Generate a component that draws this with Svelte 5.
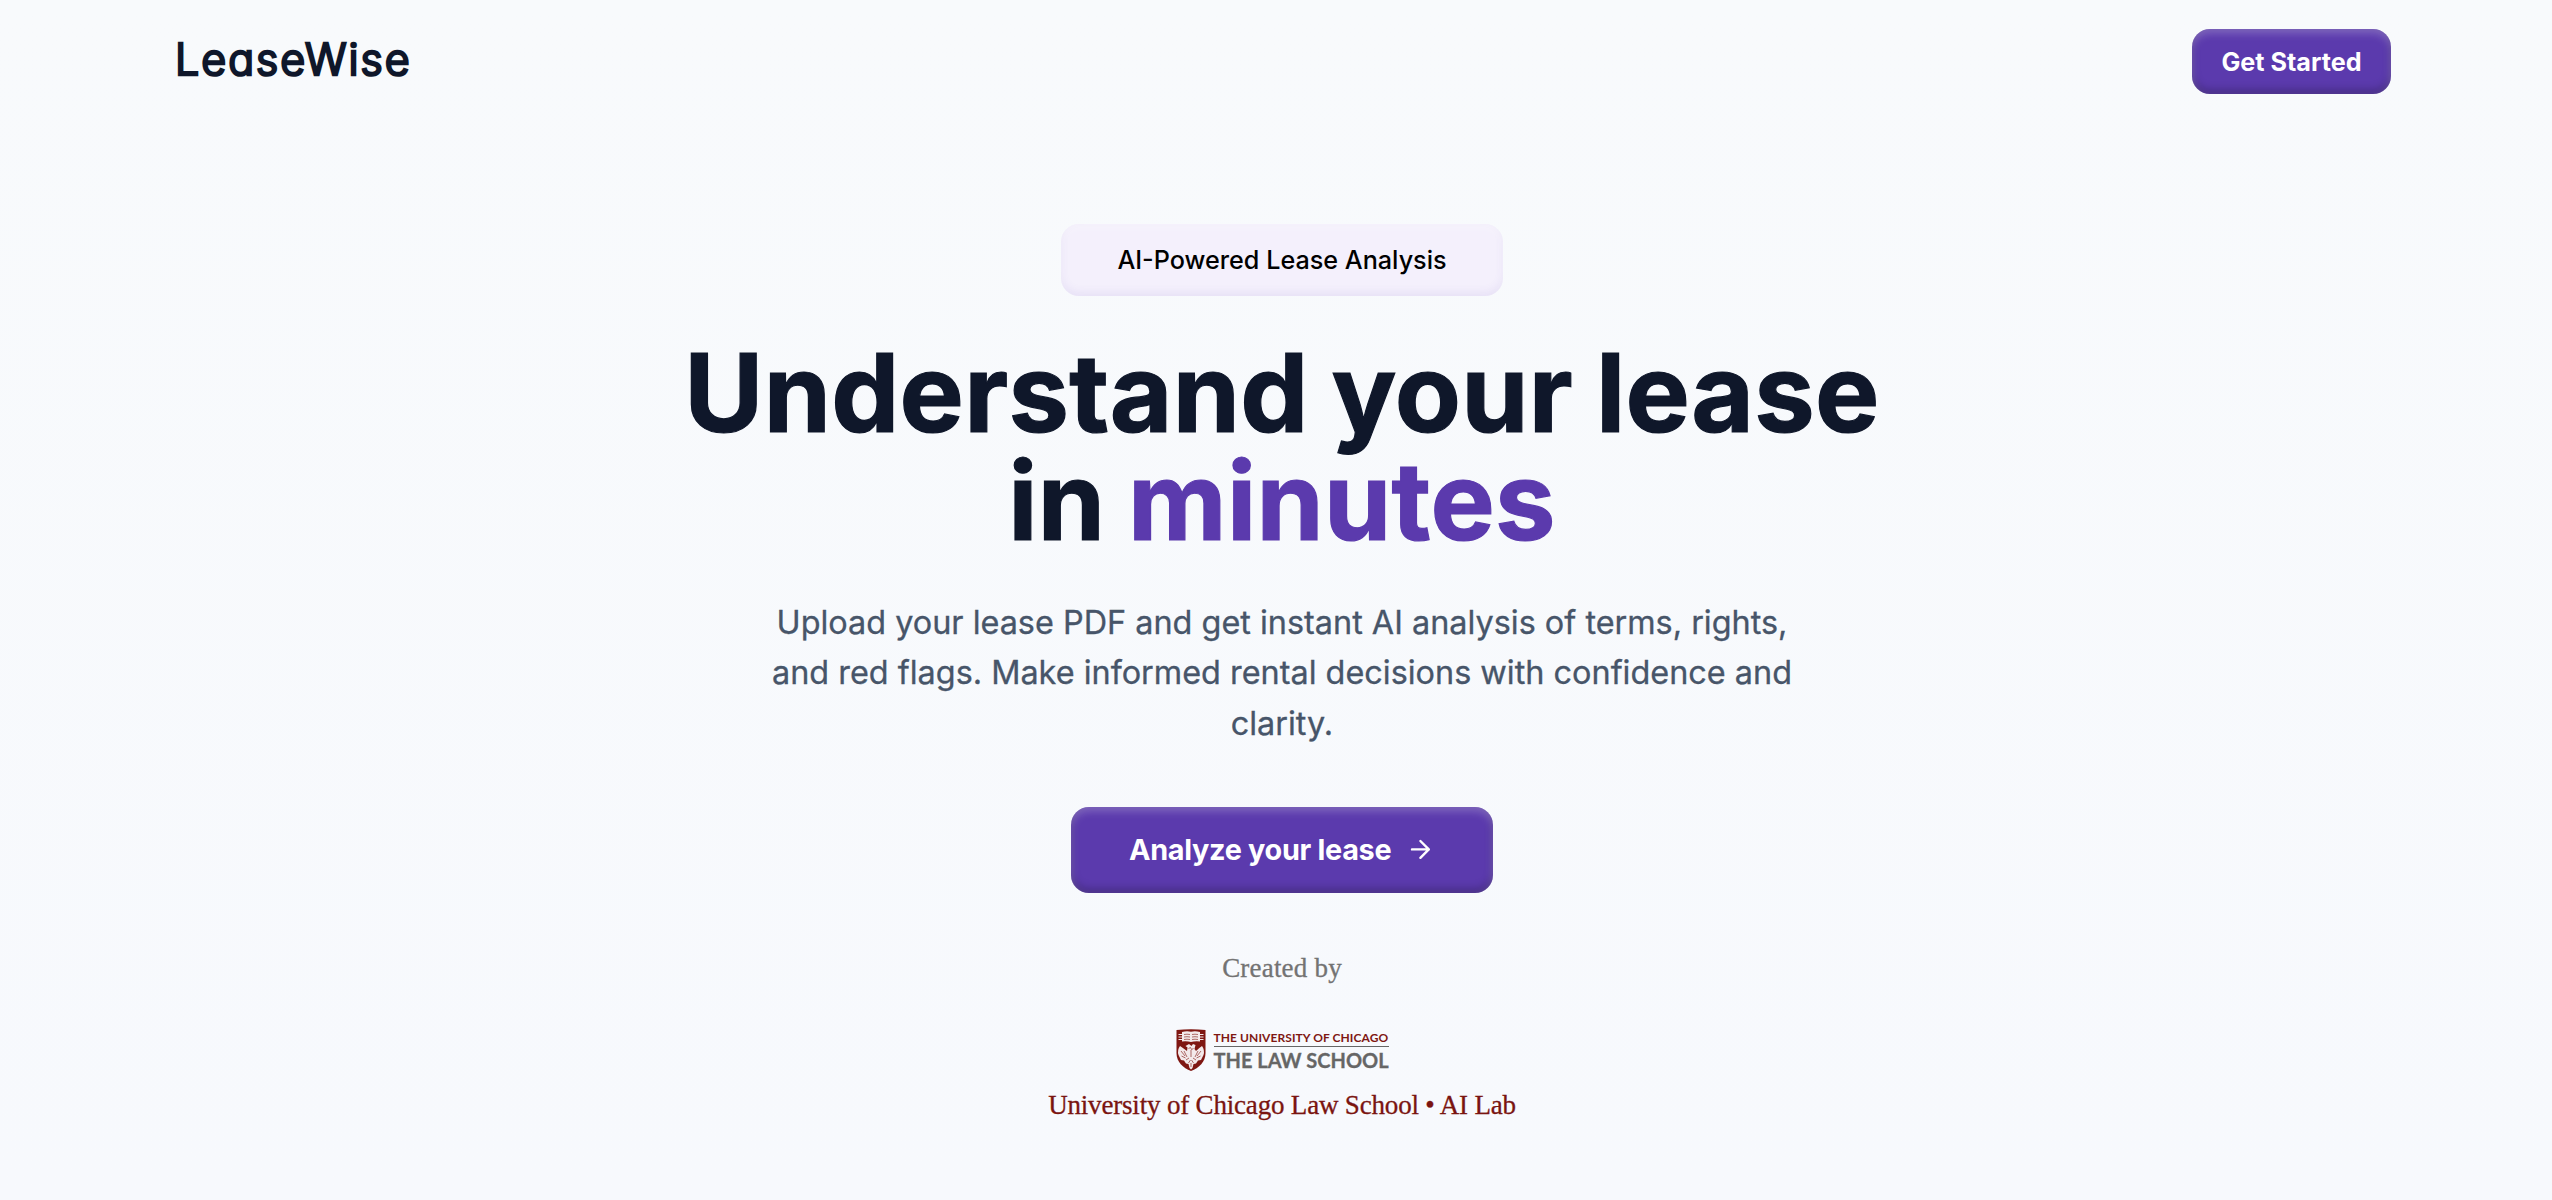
<script lang="ts">
  const bookLines = [5.5, 8, 10.5];
</script>

<div class="page">
  <header>
    <a class="brand" href="/">LeaseWise</a>
    <button class="btn btn-small">Get Started</button>
  </header>

  <main>
    <div class="badge">AI-Powered Lease Analysis</div>
    <h1>Understand your lease<br />in <span>minutes</span></h1>
    <p class="lead">
      Upload your lease PDF and get instant AI analysis of terms, rights,<br />
      and red flags. Make informed rental decisions with confidence and<br />
      clarity.
    </p>
    <button class="btn btn-large">
      <b>Analyze your lease</b>
      <svg class="arrow" viewBox="0 0 24 24" aria-hidden="true">
        <path d="M5 12h14M12 5l7 7-7 7" />
      </svg>
    </button>

    <p class="created">Created by</p>
    <div class="school">
      <svg class="shield" viewBox="0 0 30 42" aria-hidden="true">
        <path class="red" d="M.5 1Q15-.6 29.500 1V24C29.500 33 23 39 15 42 7 39 .5 33 .5 24Z" />
        <path class="white" d="M6 3Q11 1.800 15 2.800 19 1.800 24 3V12.500Q19 12 15 13 11 12 6 12.500Z" />
        {#each bookLines as y}
          <path class="white-line" d="M2.500 {y}h3.500M24 {y}h3.500" />
          <path class="red-line" d="M8 {y}q3-.6 6 0M16 {y}q3-.6 6 0" />
        {/each}
        <path class="white" d="M4 17Q1 21 2.500 26L5 31l3 .5 2 3 2.500.5 1 4 1.500 1.500 1.500-1.500 1-4 2.500-.5 2-3 3-.5L27.500 26Q29 21 26 17 23 19 20 22L18.500 20l1-4-2.500-1-1.500 2-2.500-2-3.500 2 2 1.500L11 22Q7 19 4 17Z" />
        <path class="red-line" d="M12.500 19.500l2-1 1 2 2-1M15 21v7M5 22l4 5M8 22l3 6M25 22l-4 5M22 22l-3 6M5.500 27l4 2M24.500 27l-4 2M10 31l3-2M20 31l-3-2M12.500 34l2-3M17.500 34l-2-3M15 34v4" />
      </svg>
      <div class="wordmark">
        <span class="university">THE UNIVERSITY OF CHICAGO</span>
        <span class="law">THE LAW SCHOOL</span>
      </div>
    </div>
    <p class="lab">University of Chicago Law School • AI Lab</p>
  </main>
</div>

<style>
  :global(body) {
    background: #f8fafc;
  }
  .page {
    box-sizing: border-box;
    min-height: 1200px;
    padding-left: 12px;
    overflow: hidden;
    background: linear-gradient(#f8fafc, #f7f9fd);
    color: #0f172a;
    font-family: Inter, sans-serif;
  }
  header {
    display: flex;
    align-items: center;
    justify-content: space-between;
    height: 123px;
    padding: 0 161px 0 163px;
  }
  .brand {
    padding-bottom: 6px;
    color: #0f172a;
    font-size: 43px;
    font-weight: 300;
    font-feature-settings: "cv11";
    letter-spacing: 2px;
    text-decoration: none;
    -webkit-text-stroke: 2.5px #0f172a;
    stroke-linejoin: round;
  }
  .btn {
    display: flex;
    align-items: center;
    justify-content: center;
    box-sizing: border-box;
    border: 0;
    border-radius: 18px;
    background: #5b3aad;
    box-shadow:
      inset 0 4px 8px rgba(255, 255, 255, 0.25),
      inset 0 -4px 8px rgba(0, 0, 0, 0.25);
    color: #fff;
    font-family: inherit;
    font-weight: 600;
  }
  .btn-small {
    width: 199px;
    height: 65px;
    font-size: 25.2px;
    font-weight: 700;
  }
  .btn-large {
    gap: 15px;
    width: 422px;
    height: 86px;
    margin-top: 58px;
    padding-bottom: 2px;
    font-size: 28.8px;
  }
  .btn-large b {
    font-weight: 700;
    letter-spacing: -0.3px;
  }
  .arrow {
    width: 28.8px;
    height: 28.8px;
    fill: none;
    stroke: #fff;
    stroke-width: 2;
    stroke-linecap: round;
    stroke-linejoin: round;
  }
  main {
    display: flex;
    flex-direction: column;
    align-items: center;
    padding-top: 101px;
    text-align: center;
  }
  .badge {
    display: flex;
    align-items: center;
    justify-content: center;
    width: 442px;
    height: 72px;
    border-radius: 18px;
    background: #f4f0fc;
    box-shadow:
      inset 0 4px 8px rgba(255, 255, 255, 0.25),
      inset 0 -4px 8px rgba(91, 58, 173, 0.08);
    color: #000;
    font-size: 25.2px;
    font-weight: 500;
  }
  h1 {
    margin: 43px 0 0;
    font-size: 108px;
    font-weight: 700;
    letter-spacing: 0.3px;
    word-spacing: -3px;
    line-height: 108px;
    -webkit-text-stroke: 1.2px currentColor;
  }
  h1 span {
    color: #5b3aad;
    -webkit-text-stroke-color: #5b3aad;
  }
  .lead {
    margin: 43px 0 0;
    color: #475569;
    font-size: 32.4px;
    line-height: 50.4px;
    -webkit-text-stroke: 0.3px #475569;
  }
  .created,
  .lab {
    margin: 0;
    font-family: "Liberation Serif", serif;
    font-size: 27px;
    line-height: 36px;
  }
  .created {
    margin-top: 57px;
    color: #737373;
    letter-spacing: 0.2px;
    -webkit-text-stroke: 0.3px #737373;
  }
  .school {
    display: flex;
    gap: 8px;
    height: 42px;
    margin-top: 43px;
  }
  .shield {
    width: 30px;
    height: 42px;
  }
  .red {
    fill: #7f1712;
  }
  .white {
    fill: #f3e9ea;
  }
  .white-line {
    fill: none;
    stroke: #f3e9ea;
    stroke-width: 1;
  }
  .red-line {
    fill: none;
    stroke: #8c302d;
    stroke-width: 0.7;
  }
  .wordmark {
    display: flex;
    flex-direction: column;
    width: 175px;
    font-family: Lato, sans-serif;
    font-weight: 700;
    text-align: left;
    white-space: nowrap;
  }
  .university {
    height: 17px;
    border-bottom: 1.5px solid #666;
    color: #7f1712;
    font-size: 12px;
    letter-spacing: 0.08px;
    line-height: 17px;
  }
  .law {
    color: #666;
    font-size: 20px;
    line-height: 26px;
    -webkit-text-stroke: 0.3px #666;
  }
  .lab {
    margin-top: 16px;
    color: #7a1410;
    letter-spacing: -0.18px;
    -webkit-text-stroke: 0.3px #7a1410;
  }
</style>
